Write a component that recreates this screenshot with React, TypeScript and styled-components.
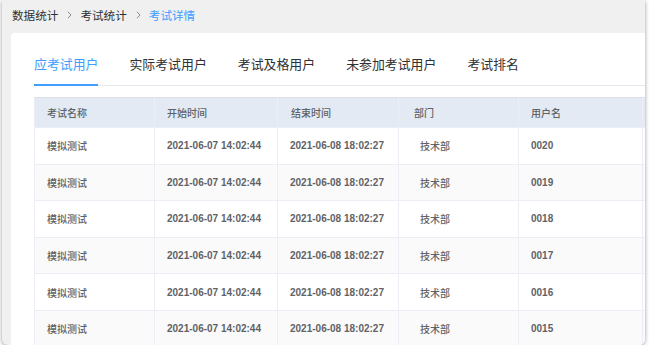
import React from "react";
import styled, { createGlobalStyle } from "styled-components";

const GlobalStyle = createGlobalStyle`
  html, body {
    margin: 0;
    padding: 0;
    background: #ffffff;
  }
  body {
    font-family: "Liberation Sans", "Noto Sans CJK SC", sans-serif;
  }
`;

const Window = styled.div`
  margin-left: 2px;
  width: 643px;
  height: 345px;
  background: #f0f0f0;
  border-radius: 0 0 6px 6px;
  box-shadow: 0 1px 4px rgba(0, 0, 0, 0.4);
  overflow: hidden;
  display: flex;
  flex-direction: column;
`;

const Breadcrumb = styled.div`
  height: 30px;
  display: flex;
  align-items: center;
  padding-left: 10px;
  font-size: 11.6px;
  color: #303133;
  flex-shrink: 0;
`;

const Crumb = styled.span<{ $active?: boolean }>`
  color: ${(p) => (p.$active ? "#409eff" : "#303133")};
`;

const Sep = styled.svg`
  width: 5px;
  height: 8px;
  margin: 0 8px 0 9px;
`;

const Card = styled.div`
  margin: 3px 0 0 9px;
  width: 720px;
  flex: 1;
  background: #ffffff;
  border-radius: 4px 4px 0 0;
  padding: 16px 0 0 23px;
`;

const TabBar = styled.div`
  display: flex;
  gap: 31px;
  border-bottom: 1px solid #e4e7ed;
  height: 36px;
`;

const Tab = styled.div<{ $active?: boolean }>`
  font-size: 12.9px;
  line-height: 32px;
  height: 35px;
  color: ${(p) => (p.$active ? "#409eff" : "#303133")};
  border-bottom: 2px solid ${(p) => (p.$active ? "#409eff" : "transparent")};
  white-space: nowrap;
`;

const Table = styled.table`
  margin-top: 11px;
  border-collapse: collapse;
  table-layout: fixed;
  width: 760px;
  font-size: 10px;
  color: #606266;
  border-left: 1px solid #ebeef5;
  border-top: 1px solid #dcdfe6;
`;

const Th = styled.th<{ $pad?: number }>`
  height: 29px;
  padding: 0 0 0 ${(p) => p.$pad ?? 12}px;
  text-align: left;
  font-weight: 500;
  background: #e3eaf4;
  border-right: 1px solid #ebeef5;
  border-bottom: 1px solid #ebeef5;
`;

const Tr = styled.tr<{ $striped?: boolean }>`
  background: ${(p) => (p.$striped ? "#fafafa" : "#ffffff")};
`;

const Td = styled.td<{ $pad?: number; $cjk?: boolean }>`
  height: 35.6px;
  padding: 0 0 0 ${(p) => p.$pad ?? 12}px;
  font-weight: ${(p) => (p.$cjk ? 500 : "bold")};
  white-space: nowrap;
  border-right: 1px solid #ebeef5;
  border-bottom: 1px solid #ebeef5;
`;

const columns = [
  { title: "考试名称", width: 120, pad: 12, bodyPad: 12 },
  { title: "开始时间", width: 123, pad: 12, bodyPad: 12 },
  { title: "结束时间", width: 121, pad: 13, bodyPad: 12 },
  { title: "部门", width: 120, pad: 15, bodyPad: 21 },
  { title: "用户名", width: 124, pad: 12, bodyPad: 12 },
  { title: "", width: 152, pad: 12, bodyPad: 12 },
];

const users = ["0020", "0019", "0018", "0017", "0016", "0015"];

const tabs = ["应考试用户", "实际考试用户", "考试及格用户", "未参加考试用户", "考试排名"];

const Chevron = () => (
  <Sep viewBox="0 0 5 8">
    <path d="M1 0.8 L4 4 L1 7.2" fill="none" stroke="#8a8d93" strokeWidth="1" />
  </Sep>
);

export default function App() {
  return (
    <>
      <GlobalStyle />
      <Window>
        <Breadcrumb>
          <Crumb>数据统计</Crumb>
          <Chevron />
          <Crumb>考试统计</Crumb>
          <Chevron />
          <Crumb $active>考试详情</Crumb>
        </Breadcrumb>
        <Card>
          <TabBar>
            {tabs.map((t, i) => (
              <Tab key={t} $active={i === 0}>
                {t}
              </Tab>
            ))}
          </TabBar>
          <Table>
            <colgroup>
              {columns.map((c, i) => (
                <col key={i} style={{ width: c.width }} />
              ))}
            </colgroup>
            <thead>
              <tr>
                {columns.map((c, i) => (
                  <Th key={i} $pad={c.pad}>
                    {c.title}
                  </Th>
                ))}
              </tr>
            </thead>
            <tbody>
              {users.map((u, i) => (
                <Tr key={u} $striped={i % 2 === 1}>
                  <Td $pad={columns[0].bodyPad} $cjk>模拟测试</Td>
                  <Td $pad={columns[1].bodyPad}>2021-06-07 14:02:44</Td>
                  <Td $pad={columns[2].bodyPad}>2021-06-08 18:02:27</Td>
                  <Td $pad={columns[3].bodyPad} $cjk>技术部</Td>
                  <Td $pad={columns[4].bodyPad}>{u}</Td>
                  <Td $pad={columns[5].bodyPad}></Td>
                </Tr>
              ))}
            </tbody>
          </Table>
        </Card>
      </Window>
    </>
  );
}
